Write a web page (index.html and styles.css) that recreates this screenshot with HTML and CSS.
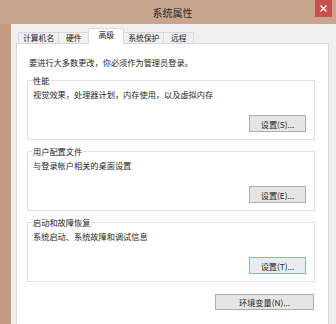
FILE: index.html
```html
<!DOCTYPE html>
<html lang="zh-CN">
<head>
<meta charset="utf-8">
<title>系统属性</title>
<link rel="stylesheet" href="styles.css">
</head>
<body>
<div class="window">
  <div class="titlebar">
    <span class="title">系统属性</span>
    <button class="close" aria-label="关闭">
      <svg width="7" height="7" viewBox="0 0 7 7"><path d="M0.5 0.5 L6.5 6.5 M6.5 0.5 L0.5 6.5" stroke="#fff" stroke-width="1.3"/></svg>
    </button>
  </div>
  <div class="frame">
    <div class="edge"></div>
    <div class="client">
      <div class="tabs">
        <div class="tab">计算机名</div>
        <div class="tab">硬件</div>
        <div class="tab tab-active">高级</div>
        <div class="tab">系统保护</div>
        <div class="tab">远程</div>
      </div>
      <div class="panel">
        <p class="intro">要进行大多数更改，你必须作为管理员登录。</p>
        <fieldset class="group">
          <legend>性能</legend>
          <div class="group-body">
            <p class="desc">视觉效果，处理器计划，内存使用，以及虚拟内存</p>
            <button class="btn">设置(S)...</button>
          </div>
        </fieldset>
        <fieldset class="group">
          <legend>用户配置文件</legend>
          <div class="group-body">
            <p class="desc">与登录帐户相关的桌面设置</p>
            <button class="btn">设置(E)...</button>
          </div>
        </fieldset>
        <fieldset class="group">
          <legend>启动和故障恢复</legend>
          <div class="group-body">
            <p class="desc">系统启动、系统故障和调试信息</p>
            <button class="btn btn-default">设置(T)...</button>
          </div>
        </fieldset>
        <div class="footer">
          <button class="btn btn-wide">环境变量(N)...</button>
        </div>
      </div>
    </div>
  </div>
</div>
</body>
</html>
```
FILE: styles.css
```css
* { box-sizing: border-box; }

html, body {
  margin: 0;
  width: 336px;
  height: 324px;
  overflow: hidden;
}

body {
  background: #f0f0f0;
  font-family: "Noto Sans CJK SC", "Noto Sans", sans-serif;
  font-size: 8.2px;
  color: #262626;
}

.titlebar {
  height: 24px;
  background: #c9a58f;
  display: flex;
  align-items: flex-start;
}

.title {
  flex: 1;
  text-align: center;
  padding: 6px 0 0 30px;
  font-size: 10px;
  line-height: 14px;
  color: #2a2a2a;
}

.close {
  width: 17px;
  height: 17px;
  margin-right: 4px;
  padding: 0;
  border: 0;
  background: #c75050;
  display: flex;
  align-items: center;
  justify-content: center;
}

.frame {
  display: flex;
  height: 300px;
}

.edge {
  width: 11px;
  background: #c49c83;
}

.client {
  flex: 1;
  padding: 4px 7px 0 5px;
}

.tabs {
  display: flex;
  align-items: flex-end;
  height: 15px;
  padding-left: 2px;
  position: relative;
  z-index: 1;
}

.tab {
  height: 11px;
  min-width: 31px;
  padding: 0 4px;
  margin-left: -1px;
  border: 1px solid #d9d9d9;
  border-bottom: 0;
  background: #f0f0f0;
  font-size: 7.8px;
  line-height: 10px;
  text-align: center;
  color: #222;
}

.tab:first-child { margin-left: 0; }

.tab-active {
  height: 16px;
  min-width: 36px;
  margin-bottom: -1px;
  background: #fff;
  line-height: 12px;
}

.panel {
  height: 290px;
  background: #fff;
  border: 1px solid #d9d9d9;
  padding: 13px 13px 0 10px;
}

.intro {
  margin: 0;
  padding-left: 2px;
  line-height: 10px;
}

.group {
  margin: 6px 0 0;
  border: 1px solid #e2e2e2;
  padding: 4px 8px 7px 5px;
  min-width: 0;
}

.intro + .group { margin-top: 8px; }

.group legend {
  padding: 0 1px;
  margin-left: -1px;
  line-height: 10px;
  font-size: 8.2px;
}

.group-body {
  display: flex;
  flex-direction: column;
}

.desc {
  margin: 0;
  line-height: 10px;
}

.btn {
  font-family: inherit;
  font-size: 8.2px;
  color: #262626;
  width: 57px;
  height: 17px;
  padding: 0;
  border: 1px solid #adadad;
  background: #e5e5e5;
  line-height: 14px;
}

.group .btn {
  align-self: flex-end;
  margin-top: 16px;
}

.btn-default {
  border-color: #7fb4e6;
  background: #e9ecef;
}

.footer {
  display: flex;
  justify-content: flex-end;
  margin-top: 12px;
  padding-right: 1px;
}

.btn-wide {
  width: 99px;
  height: 16px;
}
```
